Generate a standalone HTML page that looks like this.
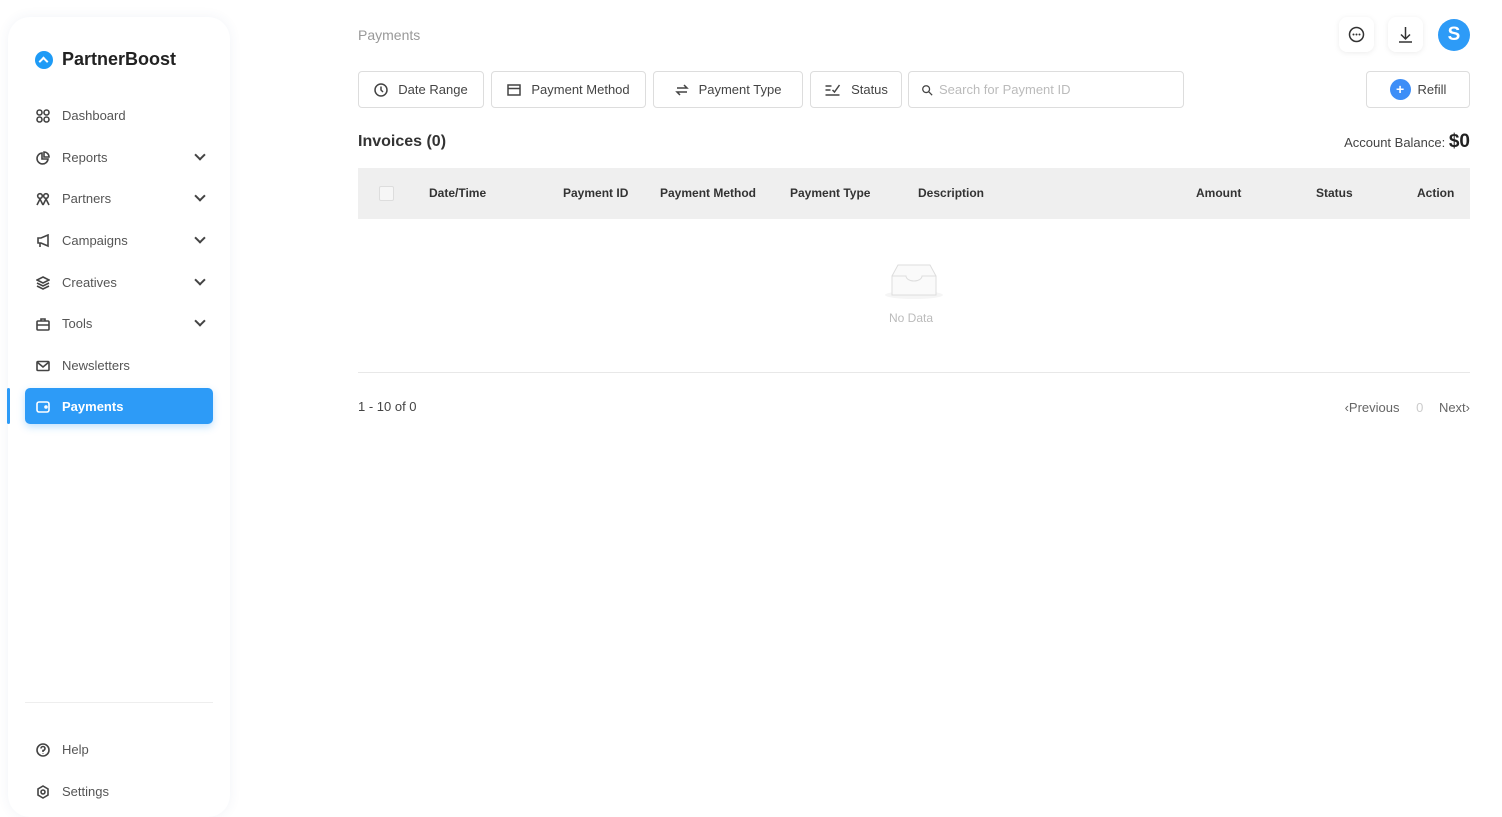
<!DOCTYPE html>
<html><head><meta charset="utf-8"><style>
*{box-sizing:border-box;margin:0;padding:0}
body{width:1502px;height:807px;background:#fff;font-family:"Liberation Sans",sans-serif;position:relative;overflow:hidden;color:#333}
.side{position:absolute;left:8px;top:17px;width:222px;height:800px;background:#fff;border-radius:22px;box-shadow:0 0 12px rgba(60,80,140,0.07)}
.logo{position:absolute;left:35px;top:49px;display:flex;align-items:center;font-weight:bold;font-size:18px;color:#222}
.logo .c{width:18px;height:18px;border-radius:50%;background:#1e9bf6;margin-right:9px;position:relative}
.nav{position:absolute;left:36px;font-size:13px;color:#555;display:flex;align-items:center;width:176px}
.nav svg{width:14px;height:14px;margin-right:12px;stroke:#444;fill:none;stroke-width:1.6}
.nav .ch{position:absolute;width:8px;height:8px;border-right:2px solid #444;border-bottom:2px solid #444;transform:rotate(45deg);right:8px;top:1px}
.active{position:absolute;left:25px;top:388px;width:188px;height:36px;background:#2d9bf7;border-radius:5px;box-shadow:0 3px 8px rgba(45,155,247,0.3)}
.bar{position:absolute;left:7px;top:388px;width:3px;height:36px;background:#2d9bf7;border-radius:2px}
.btn{position:absolute;top:71px;height:37px;border:1px solid #ddd;border-radius:4px;font-size:13px;color:#444;display:flex;align-items:center;justify-content:center;gap:10px}
.btn svg{width:14px;height:14px;stroke:#444;fill:none;stroke-width:1.5}
.th{position:absolute;top:186px;font-size:12px;font-weight:bold;color:#333}
.ic{position:absolute;top:17px;width:35px;height:35px;border-radius:8px;background:#fff;box-shadow:0 1px 6px rgba(0,0,0,0.08)}
</style></head><body>
<div class="side"></div>
<div class="logo"><div class="c"><div style="position:absolute;left:5px;top:7px;width:7px;height:7px;border-left:2px solid #fff;border-top:2px solid #fff;transform:rotate(45deg)"></div></div>PartnerBoost</div>
<div class="nav" style="top:108px"><svg viewBox="0 0 14 14"><circle cx="3.5" cy="3.5" r="2.5"/><circle cx="10.5" cy="3.5" r="2.5"/><circle cx="3.5" cy="10.5" r="2.5"/><circle cx="10.5" cy="10.5" r="2.5"/></svg>Dashboard</div>
<div class="nav" style="top:150px"><svg viewBox="0 0 14 14"><path d="M6 2a5.5 5.5 0 1 0 6 6H6z"/><path d="M8 1v5h5A5 5 0 0 0 8 1z"/></svg>Reports<span class="ch"></span></div>
<div class="nav" style="top:191px"><svg viewBox="0 0 14 14"><circle cx="4" cy="4" r="2.3"/><circle cx="10" cy="4" r="2.3"/><path d="M1 13l3-6 3 6M7 13l3-6 3 6"/></svg>Partners<span class="ch"></span></div>
<div class="nav" style="top:233px"><svg viewBox="0 0 14 14"><path d="M2 4h3l7-3v11l-7-3H2zM4 9v4"/></svg>Campaigns<span class="ch"></span></div>
<div class="nav" style="top:275px"><svg viewBox="0 0 14 14"><path d="M7 1l6 3-6 3-6-3zM1 7l6 3 6-3M1 10l6 3 6-3"/></svg>Creatives<span class="ch"></span></div>
<div class="nav" style="top:316px"><svg viewBox="0 0 14 14"><rect x="1" y="4" width="12" height="9" rx="1"/><path d="M5 4V2h4v2M1 8h12"/></svg>Tools<span class="ch"></span></div>
<div class="nav" style="top:358px"><svg viewBox="0 0 14 14"><rect x="1" y="2.5" width="12" height="9" rx="1"/><path d="M1 3l6 5 6-5"/></svg>Newsletters</div>
<div class="bar"></div><div class="active"></div>
<div class="nav" style="top:399px;color:#fff;font-weight:bold"><svg viewBox="0 0 14 14" style="stroke:#fff"><rect x="1" y="2" width="12" height="10" rx="2"/><circle cx="10" cy="7" r="1"/></svg>Payments</div>
<div style="position:absolute;left:25px;top:702px;width:188px;height:1px;background:#eee"></div>
<div class="nav" style="top:742px"><svg viewBox="0 0 14 14"><circle cx="7" cy="7" r="6"/><path d="M5 5.5a2 2 0 1 1 2 2v1.5M7 10.5v.5"/></svg>Help</div>
<div class="nav" style="top:784px"><svg viewBox="0 0 14 14"><circle cx="7" cy="7" r="2"/><path d="M7 1l5 3v6l-5 3-5-3V4z"/></svg>Settings</div>

<div style="position:absolute;left:358px;top:27px;font-size:14px;color:#999">Payments</div>
<div class="ic" style="left:1339px"><svg viewBox="0 0 35 35" width="35" height="35"><circle cx="17.5" cy="17.5" r="7" fill="none" stroke="#333" stroke-width="1.5"/><circle cx="14.5" cy="17.5" r="1" fill="#333"/><circle cx="17.5" cy="17.5" r="1" fill="#333"/><circle cx="20.5" cy="17.5" r="1" fill="#333"/></svg></div>
<div class="ic" style="left:1388px"><svg viewBox="0 0 35 35" width="35" height="35" fill="none" stroke="#333" stroke-width="1.5"><path d="M17.5 10v12M13 17.5l4.5 4.5 4.5-4.5M11 25h13"/></svg></div>
<div style="position:absolute;left:1438px;top:19px;width:32px;height:32px;border-radius:50%;background:#2d9bf7;color:#fff;font-weight:bold;font-size:19px;text-align:center;line-height:32px">S</div>

<div class="btn" style="left:358px;width:126px"><svg viewBox="0 0 14 14"><circle cx="7" cy="7" r="6"/><path d="M7 3.5V7l2 2"/></svg>Date Range</div>
<div class="btn" style="left:491px;width:155px"><svg viewBox="0 0 14 14"><rect x="1" y="2" width="12" height="10"/><path d="M1 5.5h12"/></svg>Payment Method</div>
<div class="btn" style="left:653px;width:150px"><svg viewBox="0 0 14 14"><path d="M2 5h10l-3-3M12 9H2l3 3"/></svg>Payment Type</div>
<div class="btn" style="left:810px;width:92px"><svg viewBox="0 0 16 14" style="width:17px"><path d="M1 3h6M1 7h5M1 12h14M8 7l2 2 5-7"/></svg>Status</div>
<div class="btn" style="left:908px;width:276px;justify-content:flex-start;padding-left:12px;gap:6px;color:#bbb"><svg viewBox="0 0 14 14" style="width:12px"><circle cx="6" cy="6" r="4"/><path d="M9 9l4 4"/></svg>Search for Payment ID</div>
<div class="btn" style="left:1366px;width:104px;gap:7px"><span style="width:21px;height:21px;border-radius:50%;background:#3d8ef7;color:#fff;text-align:center;line-height:21px;font-weight:bold;font-size:14px">+</span>Refill</div>

<div style="position:absolute;left:358px;top:133px;font-size:16px;font-weight:bold;color:#333">Invoices (0)</div>
<div style="position:absolute;right:32px;top:131px;font-size:13px;color:#444">Account Balance: <b style="font-size:19px;color:#222">$0</b></div>

<div style="position:absolute;left:358px;top:168px;width:1112px;height:51px;background:#efefef"></div>
<div style="position:absolute;left:379px;top:186px;width:15px;height:15px;border:1px solid #ddd;background:#f6f6f6;border-radius:2px"></div>
<div class="th" style="left:429px">Date/Time</div>
<div class="th" style="left:563px">Payment ID</div>
<div class="th" style="left:660px">Payment Method</div>
<div class="th" style="left:790px">Payment Type</div>
<div class="th" style="left:918px">Description</div>
<div class="th" style="left:1196px">Amount</div>
<div class="th" style="left:1316px">Status</div>
<div class="th" style="left:1417px">Action</div>

<svg style="position:absolute;left:884px;top:262px" width="60" height="40" viewBox="0 0 60 40"><ellipse cx="30" cy="33" rx="29" ry="4" fill="#f5f5f5"/><path d="M8 14l6-11h32l6 11v19H8z" fill="#fafafa" stroke="#ddd"/><path d="M8 14h14a8 5 0 0 0 16 0h14" fill="none" stroke="#ddd"/></svg>
<div style="position:absolute;left:889px;top:311px;font-size:12px;color:#bbb">No Data</div>
<div style="position:absolute;left:358px;top:372px;width:1112px;height:1px;background:#e8e8e8"></div>
<div style="position:absolute;left:358px;top:399px;font-size:13px;color:#444">1 - 10 of 0</div>
<div style="position:absolute;right:32px;top:400px;font-size:13px;color:#666">&lsaquo;Previous <span style="color:#ccc;margin:0 12px 0 13px">0</span> Next&rsaquo;</div>
</body></html>
